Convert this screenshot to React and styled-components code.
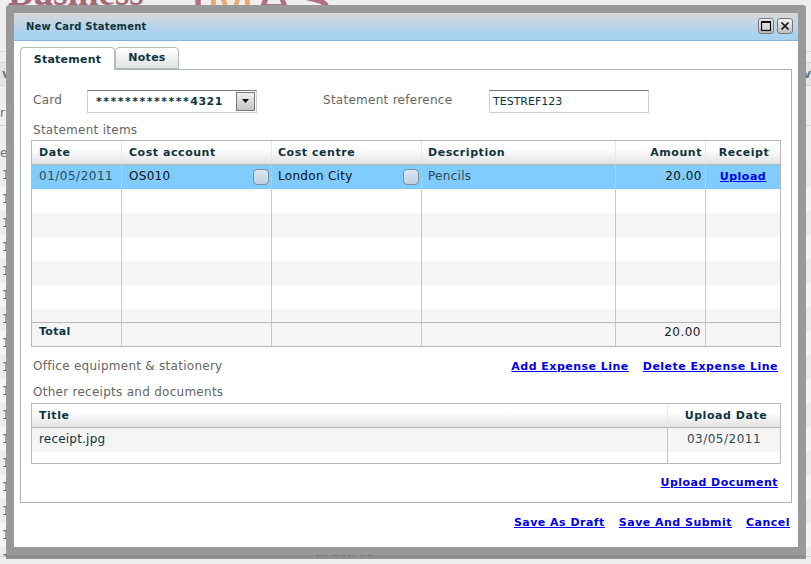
import React from "react";
import styled, { createGlobalStyle } from "styled-components";

const GlobalStyle = createGlobalStyle`
  html, body {
    margin: 0;
    padding: 0;
    height: 100%;
    background: #eeeeee;
    overflow: hidden;
  }
  * {
    box-sizing: border-box;
  }
`;

const font = `"DejaVu Sans", Verdana, sans-serif`;

const Page = styled.div`
  position: relative;
  width: 811px;
  height: 564px;
  overflow: hidden;
  background: #eeeeee;
  font-family: ${font};
  font-size: 12px;
  color: #49606a;
`;

const Banner = styled.div`
  height: 52px;
  display: flex;
  align-items: flex-start;
  border-bottom: 1px solid #d5d5d5;
`;

const BannerLeft = styled.div`
  width: 190px;
  flex: none;
`;

const BannerName = styled.div`
  height: 14px;
  margin-top: -28px;
  padding-left: 8px;
  font-family: "Liberation Serif", serif;
  font-size: 37px;
  line-height: 42px;
  font-weight: 700;
  color: #a4687a;
`;

const Tagline = styled.div`
  margin: 20px 0 0 -6px;
  font-size: 12px;
  color: #eda86f;
`;

const BannerMark = styled.div`
  display: flex;
  margin-top: -34px;
  font-family: "Liberation Sans", sans-serif;
  font-size: 58px;
  line-height: 68px;
`;

const MarkLetter = styled.span`
  color: ${(p) => p.$color};
`;

const NavStrip = styled.div`
  height: 24px;
  margin-top: 10px;
  padding: 0 0 0 2px;
  display: flex;
  justify-content: space-between;
  line-height: 22px;
  font-weight: 700;
  color: #5f7680;
  background: #e4e4e4;
  border-top: 1px solid #d5d5d5;
  border-bottom: 1px solid #d5d5d5;
`;

const SideBlock = styled.div`
  height: ${(p) => p.$height}px;
  padding: ${(p) => p.$pad}px 0 0 0;
  border-bottom: ${(p) => (p.$line ? "1px solid #d5d5d5" : "none")};
  color: #5f7680;
`;

const BackTable = styled.div`
  height: 394px;
  overflow: hidden;
  border-bottom: 1px solid #cfcfcf;
`;

const BackRow = styled.div`
  height: 24px;
  display: grid;
  grid-template-columns: 36px 114px 114px 115px 114px;
  line-height: 24px;
  background: ${(p) => (p.$odd ? "#f4f4f4" : "#ececec")};
  color: #49606a;
`;

const BackCell = styled.div`
  border-right: 1px solid #cccccc;
  text-align: ${(p) => (p.$right ? "right" : "left")};
  padding: 0 4px 0 2px;
`;

const Modal = styled.div`
  position: absolute;
  left: 6px;
  top: 5px;
  width: 800px;
  height: 550px;
  border: 8px solid #999999;
  border-radius: 3px 3px 0 0;
  background: #ffffff;
  box-shadow: 0 4px 0 rgba(110, 110, 110, 0.72);
  display: flex;
  flex-direction: column;
`;

const TitleBar = styled.div`
  height: 28px;
  flex: none;
  display: flex;
  align-items: center;
  justify-content: space-between;
  padding: 0 5px 1px 12px;
  background: linear-gradient(#d8d8d8, #a9d2f0 80%);
  border-bottom: 1px solid #85b4d6;
`;

const Title = styled.div`
  font-size: 10px;
  font-weight: 700;
  letter-spacing: 0.2px;
  color: #0f3440;
`;

const WindowButtons = styled.div`
  display: flex;
  gap: 3px;
`;

const WindowButton = styled.div`
  width: 16px;
  height: 16px;
  border: 1px solid #777777;
  border-radius: 3px;
  background: linear-gradient(#f2f2f2, #bdbdbd);
  display: flex;
  align-items: center;
  justify-content: center;
`;

const Body = styled.div`
  flex: 1;
  padding: 6px 6px 0;
`;

const Tabs = styled.div`
  display: flex;
  height: 23px;
  position: relative;
  z-index: 1;
`;

const Tab = styled.div`
  height: ${(p) => (p.$active ? "23px" : "22px")};
  width: ${(p) => p.$width}px;
  display: flex;
  align-items: center;
  justify-content: center;
  padding-bottom: ${(p) => (p.$active ? "0" : "1px")};
  font-size: 11px;
  font-weight: 700;
  letter-spacing: 0.25px;
  color: #0f3440;
  border: 1px solid #b4bcbc;
  border-bottom: ${(p) => (p.$active ? "none" : "1px solid #b4bcbc")};
  border-radius: 4px 4px 0 0;
  background: ${(p) => (p.$active ? "#ffffff" : "linear-gradient(#ffffff, #e2e2e2)")};
`;

const Panel = styled.div`
  height: 434px;
  margin-top: -1px;
  border: 1px solid #aab4b4;
  padding: 19px 10px 0 10px;
`;

const FormRow = styled.div`
  display: flex;
  align-items: center;
  height: 24px;
`;

const Label = styled.div`
  width: ${(p) => p.$width || "auto"};
  margin-left: ${(p) => p.$left || 0}px;
  padding-left: 2px;
  padding-bottom: ${(p) => p.$lift || 0}px;
  font-size: 12px;
  letter-spacing: 0.27px;
  color: #666666;
  white-space: nowrap;
`;

const Select = styled.div`
  width: 170px;
  height: 23px;
  border: 1px solid #d0d0d0;
  border-top: 1px solid #777777;
  display: flex;
  align-items: center;
  justify-content: space-between;
  padding: 0 1px 0 8px;
`;

const SelectValue = styled.span`
  font-weight: 700;
  font-size: 11px;
  letter-spacing: ${(p) => p.$spacing}px;
  color: #0f3440;
`;

const SelectButton = styled.div`
  width: 19px;
  height: 19px;
  border: 1px solid #777777;
  background: linear-gradient(#f0f0f0, #c4c4c4);
  display: flex;
  align-items: center;
  justify-content: center;
`;

const TextInput = styled.div`
  width: 160px;
  height: 23px;
  border: 1px solid #d0d0d0;
  border-top: 1px solid #777777;
  padding-left: 3px;
  line-height: 22px;
  font-size: 11px;
  color: #0f3440;
`;

const SectionLabel = styled(Label)`
  height: 17px;
  line-height: 15px;
  margin-top: ${(p) => p.$top}px;
  margin-bottom: ${(p) => p.$bottom || 0}px;
`;

const Table = styled.div`
  border: 1px solid #b8b8b8;
  height: ${(p) => p.$height}px;
  display: flex;
  flex-direction: column;
  overflow: hidden;
`;

const Row = styled.div`
  display: grid;
  flex: none;
  grid-template-columns: ${(p) => p.$columns};
  height: ${(p) => p.$height || 24}px;
  background: ${(p) => p.$bg || "#ffffff"};
`;

const HeadRow = styled(Row)`
  height: 24px;
  background: linear-gradient(#ffffff 35%, #e2e2e2);
  border-bottom: 1px solid #b8b8b8;
`;

const Head = styled.div`
  padding: 0 ${(p) => p.$pad || 7}px 0 ${(p) => p.$padLeft || p.$pad || 7}px;
  line-height: 23px;
  font-weight: 700;
  font-size: 11px;
  letter-spacing: 0.55px;
  color: #0f3440;
  text-align: ${(p) => p.$align || "left"};
  border-right: ${(p) => (p.$last ? "none" : "1px solid #e8e8e8")};
  white-space: nowrap;
`;

const Cell = styled.div`
  position: relative;
  padding: 0 ${(p) => p.$pad || 7}px;
  line-height: ${(p) => p.$line || 23}px;
  font-size: ${(p) => (p.$bold ? 11 : 12)}px;
  letter-spacing: ${(p) => p.$spacing ?? 0.3}px;
  color: ${(p) => p.$color || "#0f3440"};
  font-weight: ${(p) => (p.$bold ? 700 : 400)};
  text-align: ${(p) => p.$align || "left"};
  border-right: ${(p) => (p.$last ? "none" : "1px solid #c8c8c8")};
  white-space: nowrap;
`;

const Lookup = styled.span`
  position: absolute;
  right: 2px;
  top: 4px;
  width: 16px;
  height: 16px;
  border: 1px solid #7f8f9f;
  border-radius: 4px;
  background: linear-gradient(#dbe8f4, #bcd0e4);
`;

const RowsArea = styled.div`
  flex: 1;
  overflow: hidden;
`;

const TotalRow = styled(Row)`
  border-top: 1px solid #b8b8b8;
  height: 24px;
`;

const LinkRow = styled.div`
  display: flex;
  align-items: center;
  justify-content: ${(p) => p.$justify || "flex-end"};
  gap: 14px;
  height: ${(p) => p.$height}px;
  padding-right: ${(p) => p.$right ?? 3}px;
`;

const ActionLink = styled.a`
  font-weight: 700;
  font-size: 11px;
  letter-spacing: 0.48px;
  color: #0000ee;
  text-decoration: underline;
  cursor: pointer;
  white-space: nowrap;
`;

const itemColumns = "90px 150px 150px 194px 90px 1fr";
const docColumns = "636px 1fr";
const stripes = ["#ffffff", "#f5f5f5", "#ffffff", "#f5f5f5", "#ffffff", "#f5f5f5"];
const backAmounts = Array.from({ length: 17 }, (_, i) => i);

function App() {
  return (
    <>
      <GlobalStyle />
      <Page>
        <Banner>
          <BannerLeft>
            <BannerName>Business</BannerName>
            <Tagline>s</Tagline>
          </BannerLeft>
          <BannerMark>
            <MarkLetter $color="#b06f82">I</MarkLetter>
            <MarkLetter $color="#eda86f">M</MarkLetter>
            <MarkLetter $color="#b06f82">A</MarkLetter>
            <MarkLetter $color="#b06f82">S</MarkLetter>
          </BannerMark>
        </Banner>
        <NavStrip>
          <span>v</span>
          <span>v</span>
        </NavStrip>
        <SideBlock $height={40} $pad={20} $line>r</SideBlock>
        <SideBlock $height={37} $pad={20}>e</SideBlock>
        <BackTable>
          {backAmounts.map((i) => (
            <BackRow key={i} $odd={i % 2 === 1}>
              <BackCell>1</BackCell>
              <BackCell />
              <BackCell />
              <BackCell $right>{i === 16 ? "48,848.00" : ""}</BackCell>
              <BackCell />
            </BackRow>
          ))}
        </BackTable>

        <Modal>
          <TitleBar>
            <Title>New Card Statement</Title>
            <WindowButtons>
              <WindowButton>
                <svg width="12" height="12" viewBox="0 0 12 12">
                  <rect x="1.5" y="1.5" width="9" height="9" fill="none" stroke="#111" strokeWidth="1.2" />
                  <rect x="1" y="1" width="10" height="2" fill="#111" />
                </svg>
              </WindowButton>
              <WindowButton>
                <svg width="12" height="12" viewBox="0 0 12 12">
                  <path d="M2.5 2.5 L9.5 9.5 M9.5 2.5 L2.5 9.5" stroke="#111" strokeWidth="1.7" />
                </svg>
              </WindowButton>
            </WindowButtons>
          </TitleBar>
          <Body>
            <Tabs>
              <Tab $active $width={95}>Statement</Tab>
              <Tab $width={64}>Notes</Tab>
            </Tabs>
            <Panel>
              <FormRow>
                <Label $width="56px" $lift={3}>Card</Label>
                <Select>
                  <span>
                    <SelectValue $spacing={1.5}>*************</SelectValue>
                    <SelectValue $spacing={0.5}>4321</SelectValue>
                  </span>
                  <SelectButton>
                    <svg width="9" height="6" viewBox="0 0 9 6">
                      <path d="M1 1 H8 L4.5 5 Z" fill="#111" />
                    </svg>
                  </SelectButton>
                </Select>
                <Label $width="168px" $left={64} $lift={3}>Statement reference</Label>
                <TextInput>TESTREF123</TextInput>
              </FormRow>
              <SectionLabel $top={10}>Statement items</SectionLabel>
              <Table $height={207}>
                <HeadRow $columns={itemColumns}>
                  <Head>Date</Head>
                  <Head>Cost account</Head>
                  <Head $pad={6}>Cost centre</Head>
                  <Head $pad={6}>Description</Head>
                  <Head $align="right" $pad={3}>Amount</Head>
                  <Head $align="center" $padLeft={9} $pad={7} $last>Receipt</Head>
                </HeadRow>
                <RowsArea>
                  <Row $columns={itemColumns} $bg="#80ccff">
                    <Cell $color="#2f4a55" $spacing={0.5}>01/05/2011</Cell>
                    <Cell $color="#111">OS010<Lookup /></Cell>
                    <Cell $color="#111" $pad={6}>London City<Lookup /></Cell>
                    <Cell $color="#2f4a55" $pad={6}>Pencils</Cell>
                    <Cell $align="right" $pad={3} $color="#111" $spacing={0.5}>20.00</Cell>
                    <Cell $align="center" $last><ActionLink>Upload</ActionLink></Cell>
                  </Row>
                  {stripes.map((bg, i) => (
                    <Row key={i} $columns={itemColumns} $bg={bg}>
                      <Cell />
                      <Cell />
                      <Cell />
                      <Cell />
                      <Cell />
                      <Cell $last />
                    </Row>
                  ))}
                </RowsArea>
                <TotalRow $columns={itemColumns} $bg="#f5f5f5">
                  <Cell $bold $line={18}>Total</Cell>
                  <Cell />
                  <Cell />
                  <Cell />
                  <Cell $align="right" $pad={4} $color="#222" $line={18} $spacing={0.5}>20.00</Cell>
                  <Cell $last />
                </TotalRow>
              </Table>
              <LinkRow $height={38} $justify="space-between">
                <Label>Office equipment &amp; stationery</Label>
                <LinkRow $height={38} $right={0}>
                  <ActionLink>Add Expense Line</ActionLink>
                  <ActionLink>Delete Expense Line</ActionLink>
                </LinkRow>
              </LinkRow>
              <SectionLabel $top={0} $bottom={1}>Other receipts and documents</SectionLabel>
              <Table $height={61}>
                <HeadRow $columns={docColumns}>
                  <Head>Title</Head>
                  <Head $align="center" $padLeft={11} $pad={7} $last>Upload Date</Head>
                </HeadRow>
                <RowsArea>
                  <Row $columns={docColumns} $bg="#f5f5f5">
                    <Cell $spacing={0.2}>receipt.jpg</Cell>
                    <Cell $align="center" $last $color="#2f4a55" $spacing={0.5}>03/05/2011</Cell>
                  </Row>
                  <Row $columns={docColumns}>
                    <Cell />
                    <Cell $last />
                  </Row>
                </RowsArea>
              </Table>
              <LinkRow $height={36}>
                <ActionLink>Upload Document</ActionLink>
              </LinkRow>
            </Panel>
            <LinkRow $height={38} $right={2}>
              <ActionLink>Save As Draft</ActionLink>
              <ActionLink>Save And Submit</ActionLink>
              <ActionLink>Cancel</ActionLink>
            </LinkRow>
          </Body>
        </Modal>
      </Page>
    </>
  );
}

export default App;
